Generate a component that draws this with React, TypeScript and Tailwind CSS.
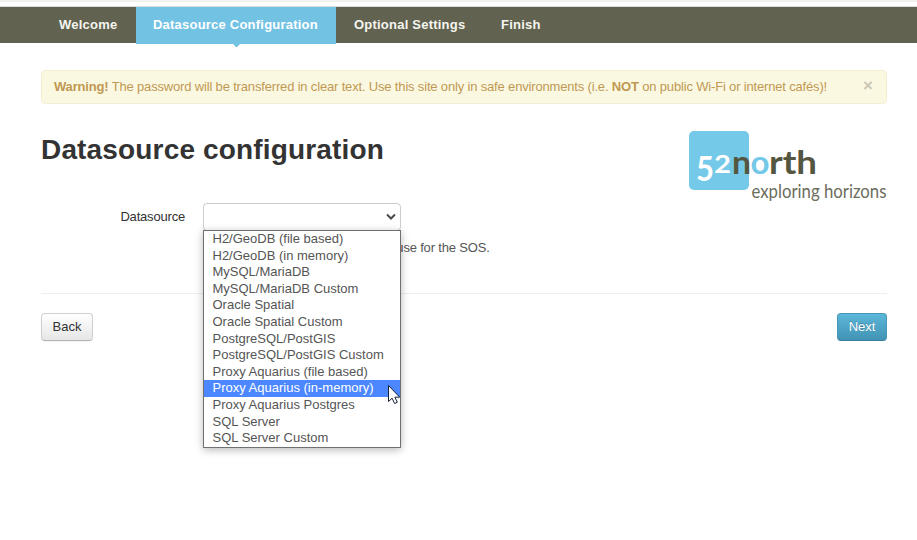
const options = [
  'H2/GeoDB (file based)',
  'H2/GeoDB (in memory)',
  'MySQL/MariaDB',
  'MySQL/MariaDB Custom',
  'Oracle Spatial',
  'Oracle Spatial Custom',
  'PostgreSQL/PostGIS',
  'PostgreSQL/PostGIS Custom',
  'Proxy Aquarius (file based)',
  'Proxy Aquarius (in-memory)',
  'Proxy Aquarius Postgres',
  'SQL Server',
  'SQL Server Custom',
];

function StepNav() {
  return (
    <nav className="flex h-9 bg-[#61624f] pl-[41px] text-[13px] leading-[35px] font-bold tracking-[0.22px] text-[#f5f5f0]">
      <span className="w-[95px] pl-[18px]">Welcome</span>
      <span className="relative h-[37px] w-[200px] bg-[#72c2e3] pl-[17px] whitespace-nowrap text-white">
        Datasource Configuration
        <svg className="absolute top-[36px] left-[96px]" width="9" height="5" viewBox="0 0 9 5">
          <path d="M0 0h9L4.5 4.5Z" fill="#72c2e3" />
        </svg>
      </span>
      <span className="w-[147px] pl-[18px] whitespace-nowrap">Optional Settings</span>
      <span className="pl-[18px]">Finish</span>
    </nav>
  );
}

function Logo() {
  return (
    <svg width="202" height="74" viewBox="0 0 202 74" className="overflow-visible font-[Lato,sans-serif]">
      <rect x="1" y="1" width="60" height="59" rx="5" fill="#74c9e8" />
      <g fill="#fff" fontWeight="700">
        <text x="8" y="51" fontSize="34" textLength="18" lengthAdjust="spacingAndGlyphs">5</text>
        <text x="26" y="43" fontSize="24" textLength="17" lengthAdjust="spacingAndGlyphs">2</text>
      </g>
      <g fontSize="33" fontWeight="700" fill="#54563f">
        <text x="44" y="43.5" textLength="19" lengthAdjust="spacingAndGlyphs">n</text>
        <text x="62.5" y="43.5" fill="#74c9e8" textLength="19" lengthAdjust="spacingAndGlyphs">o</text>
        <text x="81" y="43.5" textLength="48" lengthAdjust="spacingAndGlyphs">rth</text>
      </g>
      <text x="63.5" y="68" fontSize="19" fill="#6c6d5c" textLength="135" lengthAdjust="spacingAndGlyphs">exploring horizons</text>
    </svg>
  );
}

function Pointer() {
  return (
    <svg className="absolute top-[153px] left-[183px]" width="14" height="22" viewBox="0 0 14 22">
      <path d="M1.5 1.5v16l3.6-3.3 2.5 5.3 2.7-1.2-2.4-5.1h4.8Z" fill="#fff" stroke="#182038" />
    </svg>
  );
}

function DatasourceSelect() {
  return (
    <div className="relative h-7 w-[198px] rounded-[4px] border border-[#ccc] bg-white">
      <svg className="absolute top-[9px] right-1" width="10" height="8" viewBox="0 0 10 8">
        <path d="M1 1.5 5 5.5 9 1.5" fill="none" stroke="#4a4a4a" strokeWidth="2" />
      </svg>
      <ul className="absolute top-[26px] -left-px z-10 h-[218px] w-[198px] border border-[#707070] bg-white text-[13px] text-[#555] shadow-[0_2px_8px_rgba(0,0,0,0.28)]">
        {options.map((name) => (
          <li
            key={name}
            className={`h-[16.615px] pl-[8.5px] leading-[16px] whitespace-nowrap ${name === 'Proxy Aquarius (in-memory)' ? 'bg-[#4c87ff] text-white' : ''}`}
          >
            {name}
          </li>
        ))}
        <Pointer />
      </ul>
    </div>
  );
}

export default function App() {
  return (
    <div className="h-[540px] w-[917px] overflow-hidden bg-white font-['Liberation_Sans',Arial,sans-serif] text-[13px] text-[#333]">
      <div className="h-[2px] bg-[#f2f2f2]" />
      <div className="h-[5px] border-b border-[#dadcdc]" />
      <StepNav />
      <main className="mt-[27px] mr-[30px] ml-[41px]">
        <div className="flex h-[34px] justify-between rounded-[4px] border border-[#f6eed2] bg-[#fbf8e2] pr-[13px] pl-3 leading-[32px] text-[#c09853]">
          <span className="tracking-[-0.168px] whitespace-nowrap">
            <b>Warning!</b> The password will be transferred in clear text. Use this site only in safe environments (i.e. <b>NOT</b> on public Wi-Fi or internet cafés)!
          </span>
          <span className="text-[17px] leading-[30px] font-bold text-[#c9c6b5]">×</span>
        </div>
        <header className="flex h-[99px] justify-between pt-[26px]">
          <h1 className="pt-[3px] text-[28px] leading-[34px] font-bold tracking-[0.16px] whitespace-nowrap">Datasource configuration</h1>
          <div className="-mr-[3px]">
            <Logo />
          </div>
        </header>
        <section className="flex h-[91px] border-b border-[#eee]">
          <label className="w-[144px] pt-[1px] text-right leading-[25px] tracking-[-0.19px]">Datasource</label>
          <div className="ml-[18px]">
            <DatasourceSelect />
            <p className="pt-[7px] leading-[20px] tracking-[-0.18px] whitespace-nowrap text-[#555]">Select the datasource you want to use for the SOS.</p>
          </div>
        </section>
        <footer className="flex justify-between pt-[19px]">
          <button className="h-7 w-[52px] rounded-[4px] border border-[#d0d0d0] border-b-[#b3b3b3] bg-linear-to-b from-white to-[#e6e6e6] leading-[26px] shadow-[0_1px_2px_rgba(0,0,0,0.05)]">
            Back
          </button>
          <button className="h-7 w-[50px] rounded-[4px] border border-[#4597b9] border-b-[#34809f] bg-linear-to-b from-[#5bb7d9] to-[#4293b4] leading-[26px] text-white text-shadow-[0_-1px_0_rgba(0,0,0,0.25)]">
            Next
          </button>
        </footer>
      </main>
    </div>
  );
}
